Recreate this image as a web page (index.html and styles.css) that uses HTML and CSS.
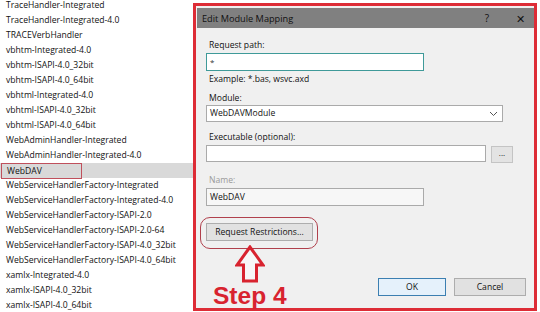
FILE: index.html
```html
<!DOCTYPE html>
<html lang="en">
<head>
    <meta charset="UTF-8">
    <title>Edit Module Mapping</title>
    <link rel="stylesheet" href="styles.css">
</head>
<body>
<div id="screen">
    <div id="handlers">
        <div class="row">TraceHandler-Integrated</div>
        <div class="row">TraceHandler-Integrated-4.0</div>
        <div class="row">TRACEVerbHandler</div>
        <div class="row">vbhtm-Integrated-4.0</div>
        <div class="row">vbhtm-ISAPI-4.0_32bit</div>
        <div class="row">vbhtm-ISAPI-4.0_64bit</div>
        <div class="row">vbhtml-Integrated-4.0</div>
        <div class="row">vbhtml-ISAPI-4.0_32bit</div>
        <div class="row">vbhtml-ISAPI-4.0_64bit</div>
        <div class="row">WebAdminHandler-Integrated</div>
        <div class="row">WebAdminHandler-Integrated-4.0</div>
        <div class="row selected"><span class="mark">WebDAV</span></div>
        <div class="row">WebServiceHandlerFactory-Integrated</div>
        <div class="row">WebServiceHandlerFactory-Integrated-4.0</div>
        <div class="row">WebServiceHandlerFactory-ISAPI-2.0</div>
        <div class="row">WebServiceHandlerFactory-ISAPI-2.0-64</div>
        <div class="row">WebServiceHandlerFactory-ISAPI-4.0_32bit</div>
        <div class="row">WebServiceHandlerFactory-ISAPI-4.0_64bit</div>
        <div class="row">xamlx-Integrated-4.0</div>
        <div class="row">xamlx-ISAPI-4.0_32bit</div>
        <div class="row">xamlx-ISAPI-4.0_64bit</div>
    </div>

    <div id="dialog">
        <div class="titlebar">
            <span class="titletext">Edit Module Mapping</span>
            <span class="titlebtn">?</span>
            <span class="titlebtn close">&#x2715;</span>
        </div>
        <div class="dlgbody">
            <div class="label first">Request path:</div>
            <div class="field path focus"><span class="caret">*</span></div>
            <div class="label hint">Example: *.bas, wsvc.axd</div>
            <div class="label gap5">Module:</div>
            <div class="field select">
                <span>WebDAVModule</span>
                <svg width="9" height="6" viewBox="0 0 9 6"><path d="M1 1 L4.5 4.5 L8 1" fill="none" stroke="#555" stroke-width="1"/></svg>
            </div>
            <div class="label gap8">Executable (optional):</div>
            <div class="exerow">
                <div class="field exe"></div>
                <div class="dots">...</div>
            </div>
            <div class="label gap10 disabled">Name:</div>
            <div class="field path name">WebDAV</div>

            <div class="lower">
                <div class="annot">
                    <div class="ring">
                        <div class="btn restrict">Request Restrictions...</div>
                    </div>
                    <svg class="arrow" width="30" height="38" viewBox="0 0 30 38">
                        <polygon points="15,2 2,20 8.5,20 8.5,36 21.5,36 21.5,20 28,20" fill="#f7f7f7" stroke="#d8232f" stroke-width="3" stroke-linejoin="miter"/>
                    </svg>
                    <div class="step">Step 4</div>
                </div>
                <div class="okcancel">
                    <div class="btn ok">OK</div>
                    <div class="btn">Cancel</div>
                </div>
            </div>
        </div>
    </div>
</div>
</body>
</html>
```

FILE: styles.css
```css
html, body {
    margin: 0;
    padding: 0;
    background: #ffffff;
}

#screen {
    display: flex;
    width: 540px;
    height: 312px;
    overflow: hidden;
    font-family: "Open Sans", "Noto Sans", sans-serif;
    font-size: 8.6px;
    color: #111111;
}

#handlers {
    width: 193px;
    flex: none;
    margin-top: -2px;
}

.row {
    height: 15px;
    line-height: 15px;
    padding-left: 6px;
    white-space: nowrap;
}

.row.selected {
    background: #d9d9d9;
    padding-left: 1px;
}

.mark {
    display: inline-block;
    width: 74px;
    height: 14px;
    line-height: 14px;
    padding-left: 5px;
    border: 1px solid #c0505c;
}

#dialog {
    width: 337px;
    height: 300px;
    margin-top: 3px;
    border: 3px solid #dd2c36;
    padding: 2px 0 0 1px;
    background: #f0f0f0;
    flex: none;
    display: flex;
    flex-direction: column;
}

.titlebar {
    height: 20px;
    background: #808080;
    display: flex;
    align-items: center;
    padding-left: 5px;
    font-size: 9.2px;
    color: #111;
}

.titletext {
    flex: 1;
}

.titlebtn {
    width: 22px;
    text-align: center;
    font-size: 10px;
    margin-right: 11px;
}

.titlebtn.close {
    font-size: 11px;
    margin-right: 3px;
}

.dlgbody {
    padding-left: 9px;
    padding-right: 8px;
    flex: 1;
}

.label {
    height: 14px;
    line-height: 14px;
    margin-left: 3px;
    margin-top: 1px;
}

.label.first { margin-top: 10px; }
.label.gap5 { margin-top: 5px; }
.label.gap8 { margin-top: 8px; }
.label.gap10 { margin-top: 10px; }
.label.disabled { color: #9a9a9a; }

.field {
    background: #ffffff;
    border: 1px solid #aaaaaa;
    box-sizing: border-box;
    margin-top: 1px;
    line-height: 15px;
    padding-left: 3px;
}

.field.path {
    width: 218px;
    height: 18px;
}

.field.focus {
    border-color: #3f9a99;
}

.caret {
    font-size: 8px;
    color: #333;
}

.field.name {
    background: #f7f7f7;
    line-height: 16px;
}

.field.select {
    width: 297px;
    height: 17px;
    margin-top: 0;
    display: flex;
    align-items: center;
    justify-content: space-between;
    padding-right: 4px;
}

.exerow {
    display: flex;
    align-items: flex-start;
    margin-top: 1px;
}

.field.exe {
    width: 280px;
    height: 17px;
    margin-top: 0;
}

.dots {
    width: 22px;
    height: 17px;
    margin-left: 5px;
    margin-top: 1px;
    box-sizing: border-box;
    border: 1px solid #c4c4c4;
    background: #e3e3e3;
    text-align: center;
    line-height: 12px;
    font-size: 8px;
}

.lower {
    display: flex;
    justify-content: space-between;
    margin-top: 11px;
}

.annot {
    margin-left: -6px;
}

.ring {
    width: 108px;
    height: 20px;
    padding: 5px 4px;
    border: 1px solid #b0404c;
    border-radius: 10px;
}

.btn {
    height: 18px;
    box-sizing: border-box;
    border: 1px solid #adadad;
    background: #e1e1e1;
    text-align: center;
    line-height: 16px;
}

.btn.restrict {
    width: 107px;
    margin-left: 1px;
}

.arrow {
    display: block;
    margin-top: -4px;
    margin-left: 35px;
}

.step {
    margin-left: 13px;
    margin-top: 1px;
    height: 24px;
    line-height: 24px;
    font-family: "Liberation Sans", Arial, sans-serif;
    font-weight: bold;
    font-size: 24.5px;
    color: #d8232f;
}

.okcancel {
    display: flex;
    gap: 8px;
    margin-top: 61px;
}

.okcancel .btn {
    width: 72px;
}

.okcancel .btn.ok {
    width: 68px;
    border-color: #3c7fb1;
    background: #e5f1fb;
}
```
